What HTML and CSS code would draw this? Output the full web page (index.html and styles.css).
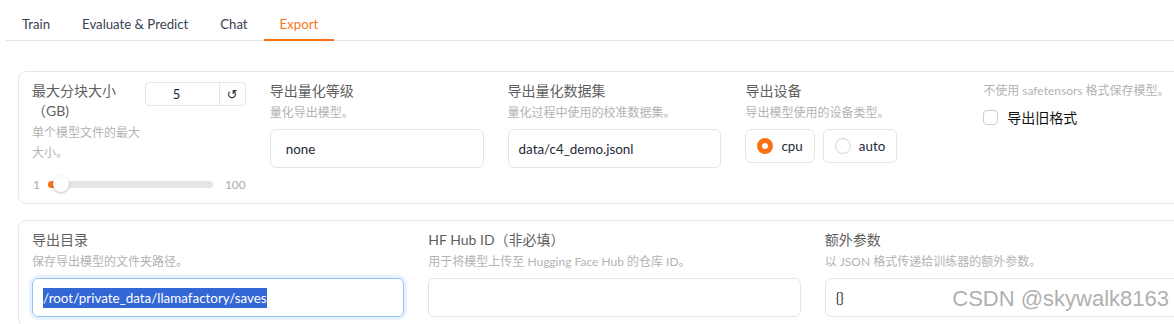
FILE: index.html
```html
<!DOCTYPE html>
<html lang="zh-CN">
<head>
    <meta charset="UTF-8">
    <meta name="viewport" content="width=device-width, initial-scale=1.0">
    <title>LLaMA Factory - Export</title>
    <link rel="stylesheet" href="styles.css">
</head>
<body>
    <div class="app">
        <div class="tab-nav">
            <button class="tab">Train</button>
            <button class="tab">Evaluate &amp; Predict</button>
            <button class="tab">Chat</button>
            <button class="tab selected">Export</button>
        </div>

        <div class="tab-body">
            <div class="panel cols-5">
                <div class="field">
                    <div class="field-head">
                        <div class="head-text">
                            <span class="label">最大分块大小（GB)</span>
                            <div class="info">单个模型文件的最大大小。</div>
                        </div>
                        <div class="number-box">
                            <span class="number-value">5</span>
                            <button class="reset">↺</button>
                        </div>
                    </div>
                    <div class="slider">
                        <span class="min">1</span>
                        <div class="track">
                            <div class="fill"></div>
                            <div class="thumb"></div>
                        </div>
                        <span class="max">100</span>
                    </div>
                </div>

                <div class="field">
                    <span class="label">导出量化等级</span>
                    <div class="info">量化导出模型。</div>
                    <div class="textbox dropdown">none</div>
                </div>

                <div class="field">
                    <span class="label">导出量化数据集</span>
                    <div class="info">量化过程中使用的校准数据集。</div>
                    <div class="textbox">data/c4_demo.jsonl</div>
                </div>

                <div class="field">
                    <span class="label">导出设备</span>
                    <div class="info">导出模型使用的设备类型。</div>
                    <div class="radios">
                        <label class="radio"><span class="dot checked"></span>cpu</label>
                        <label class="radio"><span class="dot"></span>auto</label>
                    </div>
                </div>

                <div class="field">
                    <div class="info top">不使用 safetensors 格式保存模型。</div>
                    <label class="check-row"><span class="checkbox"></span>导出旧格式</label>
                </div>
            </div>

            <div class="panel cols-3">
                <div class="field">
                    <span class="label">导出目录</span>
                    <div class="info">保存导出模型的文件夹路径。</div>
                    <div class="textbox focused"><span class="selected-text">/root/private_data/llamafactory/saves</span></div>
                </div>

                <div class="field">
                    <span class="label">HF Hub ID（非必填）</span>
                    <div class="info">用于将模型上传至 Hugging Face Hub 的仓库 ID。</div>
                    <div class="textbox"></div>
                </div>

                <div class="field">
                    <span class="label">额外参数</span>
                    <div class="info">以 JSON 格式传递给训练器的额外参数。</div>
                    <div class="textbox">{}</div>
                </div>
            </div>
        </div>
    </div>

    <div class="watermark">CSDN @skywalk8163</div>
</body>
</html>
```

FILE: styles.css
```css
html, body {
    margin: 0;
    overflow: hidden;
    background-color: #ffffff;
}

body {
    font-family: Lato, "Noto Sans CJK SC", sans-serif;
    font-size: 14px;
    color: #1f2937;
}

.app {
    padding: 8px 0 0 6px;
    width: 1220px;
}

.tab-nav {
    display: flex;
    height: 32px;
    border-bottom: 1px solid #e5e5e5;
}

.tab {
    font: inherit;
    font-size: 13.2px;
    box-sizing: border-box;
    height: 33px;
    padding: 6px 16px 5px;
    line-height: 20px;
    background: none;
    border: none;
    border-bottom: 2px solid transparent;
    color: #374151;
}

.tab.selected {
    color: #f97316;
    border-bottom-color: #f97316;
}

.tab-body {
    padding: 30px 0 0 12px;
}

.panel {
    box-sizing: border-box;
    width: 1193px;
    border: 1px solid #e5e7eb;
    border-radius: 8px;
    padding: 9px 13px 9px;
    display: grid;
    gap: 24px;
}

.cols-5 {
    grid-template-columns: repeat(5, 1fr);
}

.cols-3 {
    grid-template-columns: repeat(3, 1fr);
    margin-top: 16px;
}

.label {
    display: block;
    font-size: 14px;
    line-height: 20px;
    color: #5f5f5f;
}

.info {
    font-size: 12px;
    line-height: 20px;
    color: #b3b3b3;
    margin-top: 2px;
}

.info.top {
    margin-top: 0;
}

.field-head {
    display: flex;
}

.head-text {
    flex: 1;
}

.number-box {
    flex: none;
    box-sizing: border-box;
    width: 101px;
    height: 24px;
    margin-top: 1px;
    border: 1px solid #e5e5e5;
    border-radius: 4px;
    display: flex;
    align-items: center;
}

.number-value {
    flex: 1;
    padding-left: 27px;
    font-size: 13px;
}

.reset {
    font: 13px "DejaVu Sans", sans-serif;
    width: 26px;
    height: 22px;
    padding: 0;
    background: none;
    border: none;
    border-left: 1px solid #e5e5e5;
    color: #333333;
}

.slider {
    display: flex;
    align-items: center;
    height: 20px;
    margin-top: 11px;
    font-size: 12px;
    color: #adadad;
}

.slider .min {
    width: 16px;
    padding-left: 1px;
    box-sizing: border-box;
}

.track {
    flex: 1;
    position: relative;
    height: 7px;
    margin-right: 12px;
    background-color: #e5e5e5;
    border-radius: 4px;
}

.fill {
    position: absolute;
    left: 0;
    top: 0;
    bottom: 0;
    width: 13px;
    background-color: #f97316;
    border-radius: 4px 0 0 4px;
}

.thumb {
    position: absolute;
    left: 5px;
    top: 50%;
    width: 16px;
    height: 16px;
    margin-top: -8px;
    border-radius: 50%;
    background-color: #ffffff;
    box-shadow: 0 1px 3px rgba(0, 0, 0, 0.25);
}

.textbox {
    box-sizing: border-box;
    height: 39px;
    margin-top: 6px;
    padding: 0 10px;
    border: 1px solid #e5e5e5;
    border-radius: 6px;
    display: flex;
    align-items: center;
    font-size: 13.4px;
    line-height: 20px;
    color: #1f2937;
}

.textbox.dropdown {
    padding-left: 15px;
}

.textbox.focused {
    border-color: #93c5fd;
    box-shadow: 0 0 0 3px rgba(191, 219, 254, 0.35);
}

.selected-text {
    background-color: #3367d6;
    color: #ffffff;
}

.radios {
    display: flex;
    gap: 8px;
    margin-top: 6px;
}

.radio {
    box-sizing: border-box;
    height: 34px;
    padding: 0 11px;
    border: 1px solid #e5e5e5;
    border-radius: 6px;
    display: flex;
    align-items: center;
    gap: 8px;
    font-size: 13.4px;
    color: #1f2937;
}

.dot {
    box-sizing: border-box;
    width: 16px;
    height: 16px;
    border: 1px solid #d4d4d4;
    border-radius: 50%;
    background-color: #ffffff;
}

.dot.checked {
    border: 5px solid #f97316;
}

.check-row {
    display: flex;
    align-items: center;
    gap: 9px;
    height: 20px;
    margin-top: 6px;
    color: #111111;
}

.checkbox {
    box-sizing: border-box;
    width: 15px;
    height: 15px;
    border: 1px solid #cccccc;
    border-radius: 4px;
}

.watermark {
    position: absolute;
    right: 5px;
    top: 286px;
    font-family: "Liberation Sans", sans-serif;
    font-size: 22px;
    color: #b0b0b0;
}
```
